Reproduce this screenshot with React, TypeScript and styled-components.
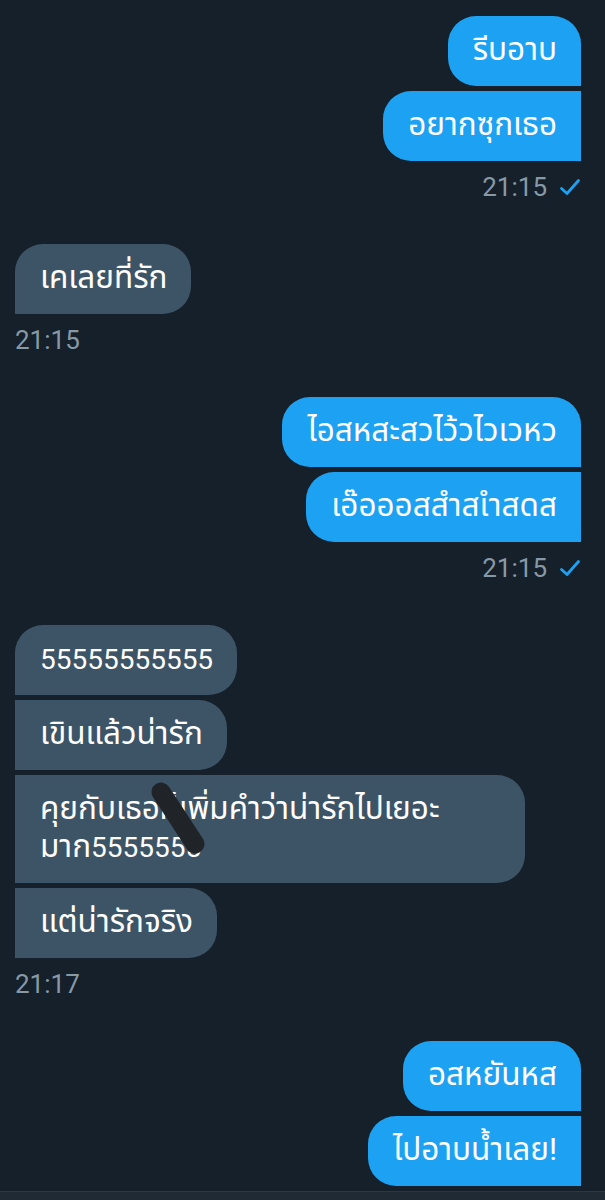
import React from "react";
import styled, { createGlobalStyle } from "styled-components";

const Global = createGlobalStyle`
  html, body {
    margin: 0;
    padding: 0;
    background: #15202b;
  }
  body {
    font-family: Roboto, "Noto Sans Thai", "Noto Sans Thai UI", "Noto Sans", "DejaVu Sans", sans-serif;
    -webkit-font-smoothing: antialiased;
  }
`;

const Screen = styled.div`
  width: 605px;
  min-height: 1240px;
  background: #15202b;
  display: flex;
  flex-direction: column;
  padding-top: 16px;
  box-sizing: border-box;
`;

const Thread = styled.div`
  display: flex;
  flex-direction: column;
  gap: 42px;
  padding: 0 24px 0 15px;
`;

const Group = styled.div<{ $side: "left" | "right" }>`
  display: flex;
  flex-direction: column;
  align-items: ${(p) => (p.$side === "right" ? "flex-end" : "flex-start")};
  gap: 5px;
`;

const Bubble = styled.div<{ $side: "left" | "right"; $first?: boolean; $wide?: boolean }>`
  position: relative;
  box-sizing: border-box;
  min-height: 70px;
  width: ${(p) => (p.$wide ? "510px" : "auto")};
  padding: 16px 24px 16px 25px;
  font-size: 28px;
  line-height: 38px;
  color: #ffffff;
  white-space: nowrap;
  background: ${(p) => (p.$side === "right" ? "#1da1f2" : "#3d5466")};
  border-radius: ${(p) =>
    p.$side === "right"
      ? `28px ${p.$first ? "28px" : "0"} 0 28px`
      : `${p.$first ? "28px" : "0"} 28px 28px 0`};
`;

const Th = styled.span`
  font-size: 31.5px;
  line-height: 30px;
`;

const Hidden = styled.span`
  position: relative;
  display: inline-block;
`;

const Meta = styled.div<{ $side: "left" | "right" }>`
  display: flex;
  align-items: center;
  gap: 12px;
  margin-top: 6px;
  height: 30px;
  font-size: 26px;
  color: #8899a6;
  align-self: ${(p) => (p.$side === "right" ? "flex-end" : "flex-start")};
`;

const Check = styled.svg`
  width: 22px;
  height: 18px;
  display: block;
`;

const Scribble = styled.svg`
  position: absolute;
  left: -13px;
  top: -14px;
  width: 64px;
  height: 74px;
  pointer-events: none;
`;

const Footer = styled.div`
  margin-top: 5px;
  height: 40px;
  background: #1f2a35;
  border-top: 1px solid #2a3744;
`;

const Tick = () => (
  <Check viewBox="0 0 22 18">
    <path
      d="M2.5 10.5 L8 15.5 L19.5 2.5"
      fill="none"
      stroke="#1da1f2"
      strokeWidth="2.8"
      strokeLinecap="round"
      strokeLinejoin="round"
    />
  </Check>
);

type Msg = {
  side: "left" | "right";
  texts: React.ReactNode[];
  time: string;
  wide?: number;
};

const oooh = "\u0E40\u0E2D\u0E4A" + "\u0E2D\u0E2D\u0E2D" + "สสำสเำสดส";

const messages: Msg[] = [
  { side: "right", texts: [<Th>รีบอาบ</Th>, <Th>อยากซุกเธอ</Th>], time: "21:15" },
  { side: "left", texts: [<Th>เคเลยที่รัก</Th>], time: "21:15" },
  {
    side: "right",
    texts: [<Th>ไอสหสะสวไว้วไวเวหว</Th>, <Th>{oooh}</Th>],
    time: "21:15",
  },
  {
    side: "left",
    wide: 2,
    texts: [
      "55555555555",
      <Th>เขินแล้วน่ารัก</Th>,
      <>
        <Th>
          คุยกับเธอ
          <Hidden>
            ก็
            <Scribble viewBox="0 0 64 74">
              <path
                d="M14 12 L48 64"
                fill="none"
                stroke="#202428"
                strokeWidth="19"
                strokeLinecap="round"
              />
            </Scribble>
          </Hidden>
          เพิ่มคำว่าน่ารักไปเยอะ
        </Th>
        <br />
        <Th>มาก</Th>5555555
      </>,
      <Th>แต่น่ารักจริง</Th>,
    ],
    time: "21:17",
  },
  { side: "right", texts: [<Th>อสหยันหส</Th>, <Th>ไปอาบน้ำเลย!</Th>], time: "" },
];

export default function App() {
  return (
    <>
      <Global />
      <Screen>
        <Thread>
          {messages.map((m, i) => (
            <Group key={i} $side={m.side}>
              {m.texts.map((t, j) => (
                <Bubble key={j} $side={m.side} $first={j === 0} $wide={m.wide === j}>
                  {t}
                </Bubble>
              ))}
              {m.time && (
                <Meta $side={m.side}>
                  <span>{m.time}</span>
                  {m.side === "right" && <Tick />}
                </Meta>
              )}
            </Group>
          ))}
        </Thread>
        <Footer />
      </Screen>
    </>
  );
}
